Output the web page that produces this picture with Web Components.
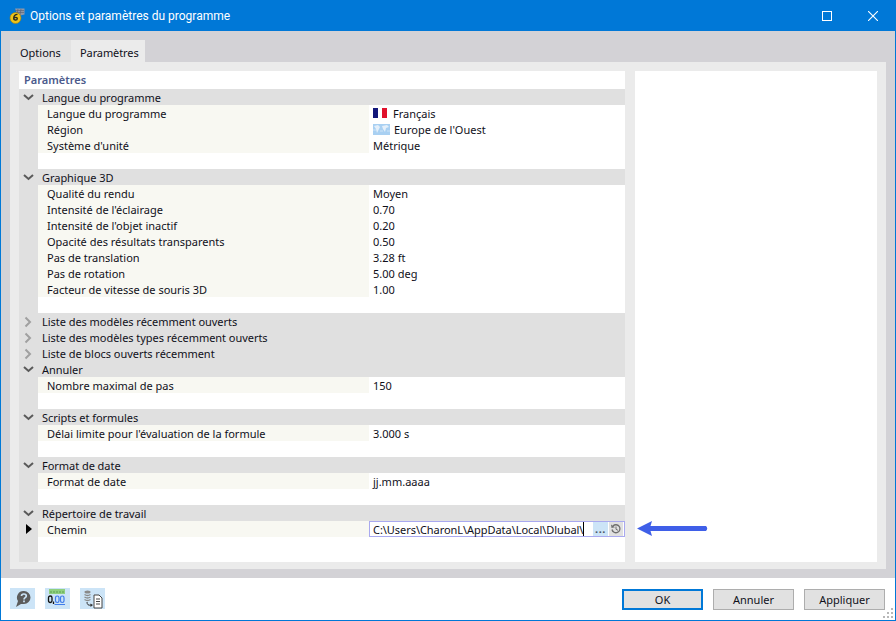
<!DOCTYPE html>
<html lang="fr"><head><meta charset="utf-8"><title>Options</title>
<style>html,body{margin:0;padding:0;background:#fff}body{font:11px/16px "Noto Sans","Open Sans",sans-serif;color:#10101a}</style>
</head><body>
<app-window>
  <title-bar slot="title">Options et paramètres du programme</title-bar>
  <tab-strip slot="tabs"><tab-item>Options</tab-item><tab-item active>Paramètres</tab-item></tab-strip>
  <settings-tree slot="tree">
    <tree-group label="Langue du programme" open>
      <tree-row label="Langue du programme"><flag-fr></flag-fr>Français</tree-row>
      <tree-row label="Région"><flag-world></flag-world>Europe de l'Ouest</tree-row>
      <tree-row label="Système d'unité">Métrique</tree-row>
    </tree-group>
    <tree-group label="Graphique 3D" open>
      <tree-row label="Qualité du rendu">Moyen</tree-row>
      <tree-row label="Intensité de l'éclairage">0.70</tree-row>
      <tree-row label="Intensité de l'objet inactif">0.20</tree-row>
      <tree-row label="Opacité des résultats transparents">0.50</tree-row>
      <tree-row label="Pas de translation">3.28 ft</tree-row>
      <tree-row label="Pas de rotation">5.00 deg</tree-row>
      <tree-row label="Facteur de vitesse de souris 3D">1.00</tree-row>
    </tree-group>
    <tree-group label="Liste des modèles récemment ouverts"></tree-group>
    <tree-group label="Liste des modèles types récemment ouverts"></tree-group>
    <tree-group label="Liste de blocs ouverts récemment"></tree-group>
    <tree-group label="Annuler" open>
      <tree-row label="Nombre maximal de pas">150</tree-row>
    </tree-group>
    <tree-group label="Scripts et formules" open>
      <tree-row label="Délai limite pour l'évaluation de la formule">3.000 s</tree-row>
    </tree-group>
    <tree-group label="Format de date" open>
      <tree-row label="Format de date">jj.mm.aaaa</tree-row>
    </tree-group>
    <tree-group label="Répertoire de travail" open last>
      <tree-row label="Chemin" current editing>C:\Users\CharonL\AppData\Local\Dlubal\</tree-row>
    </tree-group>
  </settings-tree>
  <foot-bar slot="foot"></foot-bar>
</app-window>
<script>
function def(name, css, html){
  customElements.define(name, class extends HTMLElement{
    constructor(){super();const s=this.attachShadow({mode:'open'});
      s.innerHTML='<style>'+css+'</style>'+(typeof html==='function'?html(this):html);}
  });
}
def('app-window',`
  :host{display:grid;grid-template-rows:31px 547px 42px;width:894px;height:620px;border:solid #0078d7;border-width:0 1px 1px 1px;position:relative;background:#fff}
  .body{background:#d3d2d6;display:grid;grid-template-rows:9px 22px 507px 9px;padding:0 9px}
  .panel{background:#ebebeb;padding:9px;display:grid;grid-template-columns:606px 242px;column-gap:10px;height:507px;box-sizing:border-box}
  .side{background:#fff}
  .arrow{position:absolute;left:635px;top:520px;width:73px;height:17px}
`,`<slot name="title"></slot>
<div class="body"><div></div><slot name="tabs"></slot>
<div class="panel"><slot name="tree"></slot><div class="side"></div></div><div></div></div>
<slot name="foot"></slot>
<svg class="arrow" viewBox="0 0 73 17"><path d="M1 8.500L16 1L14.500 6H70Q72.500 8.500 70 11H14.500L16 16Z" fill="#3f5fe8"/></svg>`);
def('title-bar',`
  :host{display:flex;align-items:center;height:31px;background:#0078d7;color:#fff;font:12px/16px Roboto,"Noto Sans",sans-serif;padding-left:8px}
  .t{margin-left:5px;white-space:nowrap;flex:1}
  .b{width:46px;height:31px;display:flex;align-items:center;justify-content:center}
`,`<svg width="16" height="16" viewBox="0 0 16 16"><path d="M6 0.500L15.500 0.500L15.500 6.500L9 8Z" fill="#8f97a8"/><path d="M9 1L8 6M12 1L11 7M6 2.500L15 2.500M7 4.500L15 4.500" stroke="#5e6678" stroke-width=".7"/><circle cx="6.500" cy="10" r="5.500" fill="#f0c419" stroke="#a07c10" stroke-width=".6"/><path d="M8.500 6.400C6 6.400 4.700 8.500 4.700 10.600C4.700 12.500 8.300 12.500 8.300 10.400C8.300 8.900 5.700 9.100 5 10.200" fill="none" stroke="#2c2c20" stroke-width="1.400"/></svg>
<span class="t"><slot></slot></span>
<div class="b"><svg width="10" height="10"></svg></div>
<div class="b"><svg width="10" height="10" viewBox="0 0 10 10"><rect x=".5" y=".5" width="9" height="9" fill="none" stroke="#fff"/></svg></div>
<div class="b" style="margin-right:-1px"><svg width="10" height="10" viewBox="0 0 10 10"><path d="M0 0L10 10M10 0L0 10" stroke="#fff" stroke-width="1.100"/></svg></div>`);
def('tab-strip',`:host{display:flex;height:22px;background:#d3d2d6}`,`<slot></slot>`);
def('tab-item',`
  :host{display:block;height:22px;line-height:25px;padding:0 10px;background:#e3e3e3;white-space:nowrap;box-sizing:border-box;width:61px}
  :host([active]){background:#ebebeb;width:74px;padding:0 0 0 9px;letter-spacing:-.1px}
`,`<slot></slot>`);
def('settings-tree',`
  :host{display:block;background:#fff;height:491px;overflow:hidden}
  .h{height:18px;line-height:18px;padding-left:5px;font-weight:600;color:#4b5a8c}
  .fill{height:25px;width:19px;background:#e0e0e0}
`,`<div class="h">Paramètres</div><slot></slot><div class="fill"></div>`);
def('tree-group',`
  :host{display:block}
  .head{display:flex;height:16px;background:#e0e0e0;white-space:nowrap}
  .ic{width:19px;height:16px;flex:none;margin-right:4px}
  .l{line-height:18px;letter-spacing:-.04px}
  .gap{display:flex;height:16px}.gap i{width:19px;background:#e0e0e0}
`,h=>{const o=h.hasAttribute('open');
  return `<div class="head"><svg class="ic" viewBox="0 0 19 16">${o?'<path d="M5 6L9.500 10L14 6" fill="none" stroke="#5a5a5a" stroke-width="2"/>':'<path d="M6.500 4.500L11 9L6.500 13.500" fill="none" stroke="#a0a0a0" stroke-width="2"/>'}</svg><span class="l">${h.getAttribute('label')}</span></div><slot></slot>${o&&!h.hasAttribute('last')?'<div class="gap"><i></i></div>':''}`;});
def('tree-row',`
  :host{display:grid;grid-template-columns:19px 331px 256px;height:16px;white-space:nowrap}
  .g{background:#e0e0e0;display:flex;align-items:center;justify-content:center}
  .k{background:#f8f8f2;padding-left:9px;line-height:18px;overflow:hidden}
  .v{padding-left:4px;display:flex;align-items:flex-start;line-height:18px;height:16px}
  .ed{box-sizing:border-box;border:1px solid #a9a9ef;padding-left:3px;padding-right:1px;letter-spacing:-.05px;align-items:center}
  .ed .txt{border-right:1px solid #000;height:14px;line-height:16px;margin-right:auto}
  .dots{width:15px;height:14px;background:#cce4f7;text-align:center;line-height:14px;font-weight:700;letter-spacing:.6px;color:#4a5568;margin-right:1px}
  .rs{width:14px;height:14px;background:#e0e0e0;display:flex;align-items:center;justify-content:center}
`,h=>{const cur=h.hasAttribute('current'),ed=h.hasAttribute('editing');
  return `<div class="g">${cur?'<svg width="8" height="10" viewBox="0 0 8 10"><path d="M1 0L7 5L1 10Z" fill="#000"/></svg>':''}</div><div class="k">${h.getAttribute('label')}</div>`+
  (ed?`<div class="v ed"><span class="txt"><slot></slot></span><span class="dots">...</span><span class="rs"><svg width="12" height="12" viewBox="0 0 12 12"><path d="M3 3A4 4 0 1 1 2 6.500" fill="none" stroke="#6f6f6f" stroke-width="1.300"/><path d="M1 1.500L1.500 5L5 4.200Z" fill="#6f6f6f"/><path d="M6 3.500V6.300L8 7.300" fill="none" stroke="#6f6f6f"/></svg></span></div>`:`<div class="v"><slot></slot></div>`);});
def('flag-fr',`:host{display:inline-flex;margin-right:6px;align-self:center}`,`<svg width="14" height="10" viewBox="0 0 14 10"><rect width="5" height="10" fill="#12177a"/><rect x="5" width="4" height="10" fill="#fff"/><rect x="9" width="5" height="10" fill="#e0112b"/></svg>`);
def('flag-world',`:host{display:inline-flex;margin-right:4px;align-self:center}`,`<svg width="17" height="11" viewBox="0 0 17 11"><rect width="17" height="11" fill="#a9d0f2"/><path d="M1 2L5 1L7 3L6 5L4 9L3 5ZM9 2L14 1L16 3L13 4L12 8L10 5Z" fill="#e4effa"/><path d="M0 6H3M7 7H10M14 7H17" stroke="#cfe4f7"/></svg>`);
def('foot-bar',`
  :host{display:flex;align-items:flex-start;padding:10px 10px 0 9px;height:42px;box-sizing:border-box;background:#fff;position:relative}
  .ib{width:25px;height:21px;background:#cce4f7;margin-right:10px;display:flex;align-items:center;justify-content:center;flex:none}
  .sp{flex:1}
  button{font:inherit;width:81px;height:21px;margin:1px 0 0 10px;padding:0;background:#e1e1e1;border:1px solid #adadad;color:#10101a;box-sizing:border-box}
  button.d{border:2px solid #0078d7}
  .grip{position:absolute;right:1px;bottom:1px}
`,`<div class="ib"><svg width="19" height="19" viewBox="0 0 19 19"><path d="M11 2A6.500 6.500 0 0 1 11 15H8L3 18L5 12A6.500 6.500 0 0 1 11 2Z" fill="#5c5c5c"/><path d="M8.500 7C8.500 4.300 13.300 4.300 13.300 7C13.300 8.700 11 8.700 11 10.500M11 11.500V13.300" fill="none" stroke="#cce4f7" stroke-width="1.700"/></svg></div>
<div class="ib"><svg width="21" height="19" viewBox="0 0 21 19"><rect x="2" y="0" width="16" height="5" fill="#8fd080"/><path d="M4 2V4M7 2V4M10 2V4M13 2V4M16 2V4" stroke="#5da04f"/><rect x="1.500" y="7" width="3.500" height="6.500" rx="1.700" fill="none" stroke="#111" stroke-width="1.300"/><path d="M6.500 12.500V15" stroke="#111" stroke-width="1.300"/><rect x="8.500" y="7" width="3.500" height="6.500" rx="1.700" fill="none" stroke="#3f7bea" stroke-width="1.200"/><rect x="13.500" y="7" width="3.500" height="6.500" rx="1.700" fill="none" stroke="#3f7bea" stroke-width="1.200"/><path d="M7.500 15.500H18" stroke="#3f7bea"/></svg></div>
<div class="ib"><svg width="22" height="20" viewBox="0 0 22 20"><ellipse cx="5.500" cy="3" rx="3" ry="1.500" fill="#8a8a8a"/><path d="M2.500 5.500Q5.500 7.500 8.500 5.500M2.500 8Q5.500 10 8.500 8M2.500 10.500Q5.500 12.500 8.500 10.500" fill="none" stroke="#8a8a8a" stroke-width="1.300"/><path d="M5 13Q5 17 9 16" fill="none" stroke="#333"/><path d="M8.500 14.500L11 16L8.500 18Z" fill="#333"/><path d="M12 6H17L20 9V19H12Z" fill="#fff" stroke="#444"/><path d="M14 10H18M14 12.500H18M14 15H18" stroke="#444"/></svg></div>
<div class="sp"></div><button class="d">OK</button><button>Annuler</button><button>Appliquer</button>
<svg class="grip" width="11" height="11" viewBox="0 0 11 11" fill="#b8b8b8"><rect x="8" y="0" width="2" height="2"/><rect x="4" y="4" width="2" height="2"/><rect x="8" y="4" width="2" height="2"/><rect x="0" y="8" width="2" height="2"/><rect x="4" y="8" width="2" height="2"/><rect x="8" y="8" width="2" height="2"/></svg>`);
</script>
</body></html>
